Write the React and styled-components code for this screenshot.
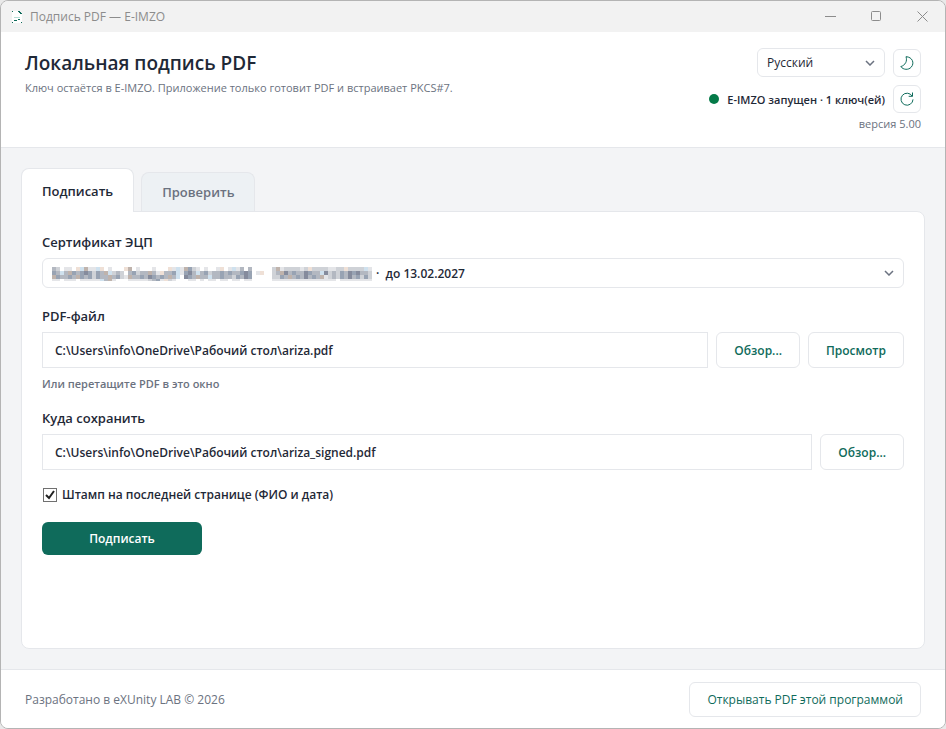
import React, { useState } from 'react';
import styled, { createGlobalStyle, css } from 'styled-components';

const colors = {
    ink: '#1f2937',
    muted: '#6b7280',
    line: '#e5e7eb',
    page: '#f3f4f6',
    accent: '#0f6b5b',
};

// one string per mosaic row, every letter is a cell colour
const MASK_ROWS = [
    '32.11.wbt11bw.1...wt.1...1...w1b1tn21.1..1w.1b13.3.....2t1222212w22221122w2222b1',
    'n3b3tn3n4n2n3tb232.3n233t31w33nb1n43b3n233n3n33n4n.1w..23t43n334n33b4232n34n4332',
    'tn33n3tn3n2n33t3n21t33n34n3n3t3b.4n3t33b33n332n34n.....22n3t3n343n3t1232n343n2n2',
    '11.111.11111b3t1...1111123n1w21...11.1.11.11.11.11.....1111111111111111.11111111',
];

const MASK_FILLS = {
    1: '#e4e5e8',
    2: '#cfd2d7',
    3: '#b3b8c1',
    4: '#858b9c',
    b: '#cfe1ee',
    n: '#98a3b3',
    t: '#bfb3ac',
    w: '#efe0d6',
};

function App() {
    const [tab, setTab] = useState('sign');
    return (
        <Window>
            <GlobalStyle />
            <TitleBar>
                <AppIcon />
                <TitleText>Подпись PDF — E-IMZO</TitleText>
                <CaptionButton aria-label="Свернуть">
                    <svg width="11" height="11"><path d="M0 5.5h11" /></svg>
                </CaptionButton>
                <CaptionButton aria-label="Развернуть">
                    <svg width="11" height="11"><rect x="0.5" y="0.5" width="9" height="9" rx="1" /></svg>
                </CaptionButton>
                <CaptionButton aria-label="Закрыть">
                    <svg width="11" height="11"><path d="M0.5 0.5l10 10M10.5 0.5l-10 10" /></svg>
                </CaptionButton>
            </TitleBar>
            <Header>
                <div>
                    <H1>Локальная подпись PDF</H1>
                    <Subtitle>Ключ остаётся в E-IMZO. Приложение только готовит PDF и встраивает PKCS#7.</Subtitle>
                </div>
                <HeaderSide>
                    <HeaderRow>
                        <LangBox>
                            <LangSelect aria-label="Язык" defaultValue="ru">
                                <option value="ru">Русский</option>
                            </LangSelect>
                            <Chevron />
                        </LangBox>
                        <IconButton aria-label="Тёмная тема">
                            <svg width="14" height="14" viewBox="0 0 14 14">
                                <path d="M6 0.7C7.4 5 5.6 9 0.8 10.6C3.4 14 8.4 14.2 11.2 11.2C14.8 7.2 12.4 0.9 6 0.7Z" />
                            </svg>
                        </IconButton>
                    </HeaderRow>
                    <HeaderRow>
                        <Dot />
                        <Status>E-IMZO запущен · 1 ключ(ей)</Status>
                        <IconButton aria-label="Обновить">
                            <svg width="14" height="14" viewBox="0 0 14 14">
                                <path d="M12.2 4.2A6 6 0 1 0 13 7.4M12.5 0.5V4.3H8.7" />
                            </svg>
                        </IconButton>
                    </HeaderRow>
                    <Version>версия 5.00</Version>
                </HeaderSide>
            </Header>
            <Main>
                <Tabs role="tablist">
                    <Tab role="tab" aria-selected={tab === 'sign'} $active={tab === 'sign'} onClick={() => setTab('sign')}>Подписать</Tab>
                    <Tab role="tab" aria-selected={tab === 'check'} $active={tab === 'check'} onClick={() => setTab('check')}>Проверить</Tab>
                </Tabs>
                <Panel>
                    <Label htmlFor="cert">Сертификат ЭЦП</Label>
                    <CertBox>
                        <CertSelect id="cert">
                            <option>{'·\u00a0\u00a0до 13.02.2027'}</option>
                        </CertSelect>
                        <Mask />
                        <Chevron />
                    </CertBox>
                    <Label htmlFor="source">PDF-файл</Label>
                    <FieldRow>
                        <PathInput id="source" defaultValue={'C:\\Users\\info\\OneDrive\\Рабочий стол\\ariza.pdf'} />
                        <Button>Обзор...</Button>
                        <Button>Просмотр</Button>
                    </FieldRow>
                    <Hint>Или перетащите PDF в это окно</Hint>
                    <Label htmlFor="target">Куда сохранить</Label>
                    <FieldRow>
                        <PathInput id="target" defaultValue={'C:\\Users\\info\\OneDrive\\Рабочий стол\\ariza_signed.pdf'} />
                        <Button>Обзор...</Button>
                    </FieldRow>
                    <CheckLabel>
                        <CheckBox type="checkbox" defaultChecked />
                        Штамп на последней странице (ФИО и дата)
                    </CheckLabel>
                    <SubmitButton>Подписать</SubmitButton>
                </Panel>
            </Main>
            <Footer>
                <span>Разработано в eXUnity LAB © 2026</span>
                <Button $light>Открывать PDF этой программой</Button>
            </Footer>
        </Window>
    );
}

function AppIcon() {
    return (
        <svg width="12" height="14" viewBox="0 0 12 14" shapeRendering="crispEdges" aria-hidden="true">
            <path d="M1 1h7l3 3v9H1z" fill="#fff" />
            <path d="M3 7h6v1H3z" fill="#b5ddd5" />
            <path d="M1 1h1v1H1zM7 1h2v1h1v1h1v1H9V3H8V2H7zM1 12h1v1H1zM10 12h1v1h-1zM3 10h3v1H3zM7 9h2v1H7z" fill="#0f6b5b" />
        </svg>
    );
}

function Chevron() {
    return (
        <ChevronSvg width="10" height="6" viewBox="0 0 10 6" aria-hidden="true">
            <path d="M1 1l4 4 4-4" />
        </ChevronSvg>
    );
}

function Mask() {
    return (
        <MaskSvg viewBox="0 0 320 16" shapeRendering="crispEdges" aria-hidden="true">
            {MASK_ROWS.map((row, y) => row.split('').map((cell, x) => (
                cell !== '.' && <rect key={`${x}-${y}`} x={x * 4} y={y * 4} width="4" height={y === 3 ? 2 : 4} fill={MASK_FILLS[cell]} />
            )))}
        </MaskSvg>
    );
}

const GlobalStyle = createGlobalStyle`
    * {
        box-sizing: border-box;
    }
    body {
        margin: 0;
        background: #e9e9e9;
    }
    body, button, input, select {
        font-family: "Open Sans", "Noto Sans", sans-serif;
        font-size: 12px;
        color: ${colors.ink};
    }
`;

const Window = styled.div`
    display: flex;
    flex-direction: column;
    min-height: 100vh;
    overflow: hidden;
    background: ${colors.page};
    border: 1px solid #b4b4b4;
    border-radius: 8px;
`;

const TitleBar = styled.div`
    display: flex;
    align-items: center;
    height: 31px;
    padding-left: 10px;
    background: #f2f2f2;
`;

const TitleText = styled.span`
    flex: 1;
    padding-left: 7px;
    color: #8c8c8c;
`;

const CaptionButton = styled.button`
    display: flex;
    align-items: center;
    justify-content: center;
    width: 46px;
    height: 31px;
    padding: 0;
    border: none;
    background: none;

    svg {
        fill: none;
        stroke: #8c8c8c;
    }
`;

const Header = styled.header`
    display: flex;
    justify-content: space-between;
    padding: 16px 24px 15px;
    background: #fff;
    border-bottom: 1px solid ${colors.line};
`;

const H1 = styled.h1`
    margin: 2px 0 0;
    font-size: 19px;
    line-height: 26px;
    font-weight: 600;
`;

const Subtitle = styled.p`
    margin: 4px 0 0;
    font-size: 11px;
    line-height: 16px;
    color: ${colors.muted};
`;

const HeaderSide = styled.div`
    display: flex;
    flex-direction: column;
    align-items: flex-end;
    gap: 8px;
`;

const HeaderRow = styled.div`
    display: flex;
    align-items: center;
    gap: 8px;
`;

const outlined = css`
    background: #fff;
    border: 1px solid ${colors.line};
    border-radius: 6px;
`;

const LangBox = styled.div`
    position: relative;
    width: 128px;
`;

const LangSelect = styled.select`
    ${outlined}
    appearance: none;
    display: block;
    width: 100%;
    height: 29px;
    padding: 0 9px;
    font-size: 12px;
`;

const ChevronSvg = styled.svg`
    position: absolute;
    top: calc(50% - 3px);
    right: 10px;
    fill: none;
    stroke: ${colors.muted};
    stroke-width: 1.5;
    pointer-events: none;
`;

const IconButton = styled.button`
    ${outlined}
    display: flex;
    align-items: center;
    justify-content: center;
    width: 28px;
    height: 28px;
    padding: 0;

    svg {
        fill: none;
        stroke: ${colors.accent};
    }
`;

const Dot = styled.span`
    width: 10px;
    height: 10px;
    border-radius: 50%;
    background: #047a48;
`;

const Status = styled.span`
    font-size: 11px;
    font-weight: 600;
`;

const Version = styled.span`
    margin-top: -5px;
    font-size: 11px;
    line-height: 16px;
    color: ${colors.muted};
`;

const Main = styled.main`
    display: flex;
    flex-direction: column;
    flex: 1;
    padding: 20px;
`;

const Tabs = styled.div`
    display: flex;
    align-items: flex-end;
    gap: 7px;
`;

const Tab = styled.button`
    position: relative;
    height: ${props => props.$active ? '44px' : '39px'};
    margin-bottom: ${props => props.$active ? '-1px' : '0'};
    padding: 0 20px;
    border: 1px solid ${colors.line};
    border-bottom: none;
    border-radius: 8px 8px 0 0;
    background: ${props => props.$active ? '#fff' : '#edf1f4'};
    color: ${props => props.$active ? colors.ink : colors.muted};
    font-size: 13px;
    font-weight: 600;
    z-index: ${props => props.$active ? 1 : 0};
`;

const Panel = styled.section`
    flex: 1;
    display: flex;
    flex-direction: column;
    align-items: flex-start;
    padding: 20px;
    background: #fff;
    border: 1px solid ${colors.line};
    border-radius: 0 8px 8px 8px;
`;

const Label = styled.label`
    margin-bottom: 6px;
    font-size: 13px;
    line-height: 20px;
    font-weight: 600;
`;

const CertBox = styled.div`
    position: relative;
    width: 100%;
    margin-bottom: 18px;
`;

const CertSelect = styled.select`
    ${outlined}
    appearance: none;
    display: block;
    width: 100%;
    height: 30px;
    padding: 0 30px 0 333px;
    font-weight: 600;
`;

const MaskSvg = styled.svg`
    position: absolute;
    top: 9px;
    left: 10px;
    width: 320px;
    height: 16px;
    pointer-events: none;
`;

const FieldRow = styled.div`
    display: flex;
    gap: 8px;
    width: 100%;
`;

const PathInput = styled.input`
    flex: 1;
    min-width: 0;
    height: 36px;
    padding: 0 12px;
    border: 1px solid ${colors.line};
    font-weight: 600;
`;

const Button = styled.button`
    ${outlined}
    height: ${props => props.$light ? '35px' : '36px'};
    padding: 0 17px;
    color: ${colors.accent};
    font-weight: ${props => props.$light ? 400 : 600};
    white-space: nowrap;
`;

const Hint = styled.p`
    margin: 8px 0 16px;
    font-size: 11px;
    line-height: 16px;
    font-weight: 600;
    color: ${colors.muted};
`;

const CheckLabel = styled.label`
    display: flex;
    align-items: center;
    gap: 4px;
    margin: 16px 0 18px;
    line-height: 18px;
    font-weight: 600;
`;

const CheckBox = styled.input`
    appearance: none;
    width: 14px;
    height: 14px;
    margin: 0 1px;
    border: 1px solid #707070;
    background: #fff;

    &:checked {
        background: url("data:image/svg+xml,%3Csvg xmlns='http://www.w3.org/2000/svg' viewBox='0 0 12 12'%3E%3Cpath d='M2 6l3 3 5-7' fill='none' stroke='%23212121' stroke-width='2'/%3E%3C/svg%3E");
    }
`;

const SubmitButton = styled.button`
    width: 160px;
    height: 33px;
    border: none;
    border-radius: 6px;
    background: ${colors.accent};
    color: #fff;
    font-weight: 600;
`;

const Footer = styled.footer`
    display: flex;
    align-items: center;
    justify-content: space-between;
    padding: 12px 24px 11px;
    background: #fff;
    border-top: 1px solid ${colors.line};
    color: ${colors.muted};
`;

export default App;
